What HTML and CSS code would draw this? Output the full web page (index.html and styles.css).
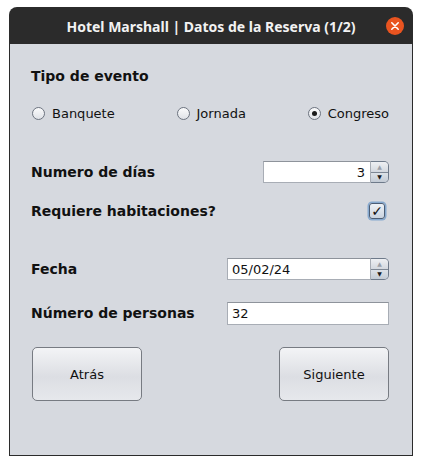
FILE: index.html
```html
<!DOCTYPE html>
<html lang="es">
<head>
<meta charset="utf-8">
<title>Hotel Marshall</title>
<link rel="stylesheet" href="styles.css">
</head>
<body>
<div class="window">
  <div class="titlebar">
    <span class="title">Hotel Marshall | Datos de la Reserva (1/2)</span>
    <span class="close">
      <svg width="18" height="18" viewBox="0 0 18 18"><circle cx="9" cy="9" r="9" fill="#e95420"/><path d="M5.8 5.8 L12.2 12.2 M12.2 5.8 L5.8 12.2" stroke="#fff" stroke-width="1.6" stroke-linecap="round"/></svg>
    </span>
  </div>
  <div class="panel">
    <div class="row r1"><span class="label">Tipo de evento</span></div>
    <div class="row r2 radios">
      <label class="radio"><span class="dot"></span>Banquete</label>
      <label class="radio"><span class="dot"></span>Jornada</label>
      <label class="radio"><span class="dot on"></span>Congreso</label>
    </div>
    <div class="row r3">
      <span class="label">Numero de días</span>
      <div class="spinner narrow">
        <span class="field right">3</span>
        <span class="arrows"><span class="up">▲</span><span class="down">▼</span></span>
      </div>
    </div>
    <div class="row r4">
      <span class="label">Requiere habitaciones?</span>
      <span class="check">✓</span>
    </div>
    <div class="row r5">
      <span class="label">Fecha</span>
      <div class="spinner wide">
        <span class="field">05/02/24</span>
        <span class="arrows"><span class="up">▲</span><span class="down">▼</span></span>
      </div>
    </div>
    <div class="row r6">
      <span class="label">Número de personas</span>
      <span class="field plain">32</span>
    </div>
    <div class="row r7">
      <button class="btn">Atrás</button>
      <button class="btn">Siguiente</button>
    </div>
  </div>
</div>
</body>
</html>
```
FILE: styles.css
```css
html, body { margin: 0; padding: 0; background: #fff; }
body { font-family: "DejaVu Sans", sans-serif; }
.window {
  margin: 7px 0 0 9px;
  width: 404px;
  height: 449px;
  display: flex;
  flex-direction: column;
  border-radius: 8px 8px 0 0;
  overflow: hidden;
  background: #2b2b2b;
}
.titlebar {
  height: 37px;
  flex: none;
  display: flex;
  align-items: center;
  justify-content: center;
  position: relative;
  color: #f2f2f2;
  font-family: "Noto Sans", "DejaVu Sans", sans-serif;
  font-weight: bold;
  font-size: 14px;
}
.title { margin-top: 1px; }
.close { position: absolute; right: 9px; top: 10px; width: 18px; height: 18px; }
.close svg { display: block; }
.panel {
  flex: 1;
  margin: 0 1px 1px 1px;
  background: #d6d9df;
  padding: 0 23px 0 21px;
  display: flex;
  flex-direction: column;
  color: #111;
}
.row { display: flex; align-items: center; justify-content: space-between; flex: none; }
.label { font-weight: bold; font-size: 14px; }
.r1 { margin-top: 20px; height: 24px; }
.r2 { margin-top: 15px; height: 20px; padding-left: 1px; padding-right: 0; }
.r3 { margin-top: 38px; height: 22px; }
.r4 { margin-top: 17px; height: 22px; }
.r5 { margin-top: 36px; height: 22px; }
.r6 { margin-top: 22px; height: 22px; }
.r7 { margin-top: 23px; height: 54px; padding-left: 1px; }
.radio { display: flex; align-items: center; font-size: 13px; gap: 7px; }
.dot {
  width: 11px; height: 11px; border-radius: 50%;
  border: 1px solid #6d7480;
  background: linear-gradient(#fbfbfc, #dfe2e7);
  display: flex; align-items: center; justify-content: center;
}
.dot.on::after { content: ""; width: 5px; height: 5px; border-radius: 50%; background: #1b1b1b; }
.spinner { display: flex; height: 22px; }
.narrow { width: 126px; }
.wide { width: 162px; }
.field {
  flex: 1;
  box-sizing: border-box;
  height: 22px;
  background: #fff;
  border: 1px solid #a8adb5;
  border-top-color: #8e939b;
  font-size: 13px;
  display: flex; align-items: center;
  padding: 0 4px;
  color: #111;
}
.field.right { justify-content: flex-end; padding-right: 5px; }
.field.plain { flex: none; width: 162px; height: 23px; }
.arrows {
  width: 18px; flex: none;
  display: flex; flex-direction: column;
  border: 1px solid #6e7a8a;
  border-left: none;
  border-radius: 0 5px 5px 0;
  box-sizing: border-box;
  overflow: hidden;
}
.arrows span {
  flex: 1; display: flex; align-items: center; justify-content: center;
  font-size: 6px; line-height: 1;
  background: linear-gradient(#eef0f3, #d3d8df);
}
.arrows .up { color: #9aa0a8; border-bottom: 1px solid #7d8794; }
.arrows .down { color: #1a1a1a; background: linear-gradient(#dde2e8, #c3cbd5); }
.check {
  width: 14px; height: 14px;
  margin-right: 4px;
  border: 1px solid #4b5d75;
  border-radius: 3px;
  background: linear-gradient(#eef2f7, #c9d3df);
  box-shadow: 0 0 0 1.5px #86a9cf;
  display: flex; align-items: center; justify-content: center;
  font-size: 14px; font-weight: bold; color: #111; line-height: 1;
}
.btn {
  width: 110px; height: 54px;
  border: 1px solid #777b82;
  border-radius: 5px;
  background: linear-gradient(#f3f4f6, #dcdee3 55%, #e6e8ec);
  font-family: "DejaVu Sans", sans-serif;
  font-size: 13px; color: #111;
  padding: 0;
}
```
